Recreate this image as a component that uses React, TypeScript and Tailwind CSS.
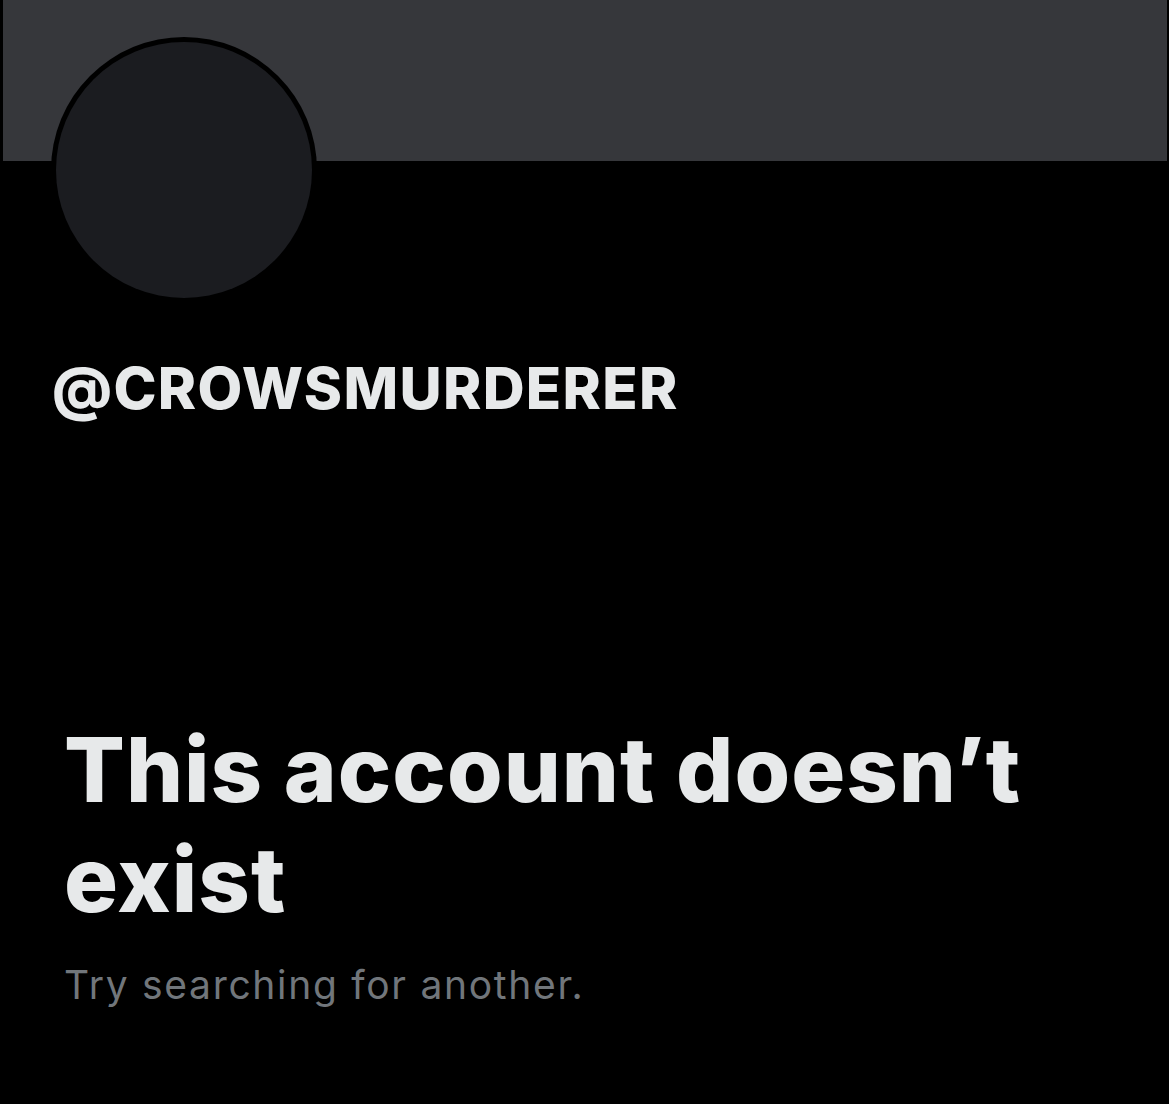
export default function App() {
  return (
    <div className="w-[1169px] h-[1104px] bg-black overflow-hidden" style={{ fontFamily: 'Inter, "Liberation Sans", Arial, sans-serif' }}>
      <div className="h-[161px] ml-[3px] mr-[2px] bg-[#36373b]" />
      <div className="-mt-[124px] ml-[51px] w-[266px] h-[266px] rounded-full bg-black p-[5px] relative">
        <div className="w-full h-full rounded-full bg-[#1b1c20]" />
      </div>
      <div className="mt-[56px] ml-[52px] text-[58px] leading-none font-extrabold tracking-[1.3px] text-[#e7e9ea]">@CROWSMURDERER</div>
      <div className="mt-[298px] ml-[64px] text-[90px] leading-[110px] font-extrabold tracking-[1px] text-[#e7e9ea] w-[1050px]">This account doesn’t exist</div>
      <div className="mt-[30px] ml-[64px] text-[39px] leading-none tracking-[1.7px] text-[#71767b]">Try searching for another.</div>
    </div>
  );
}
